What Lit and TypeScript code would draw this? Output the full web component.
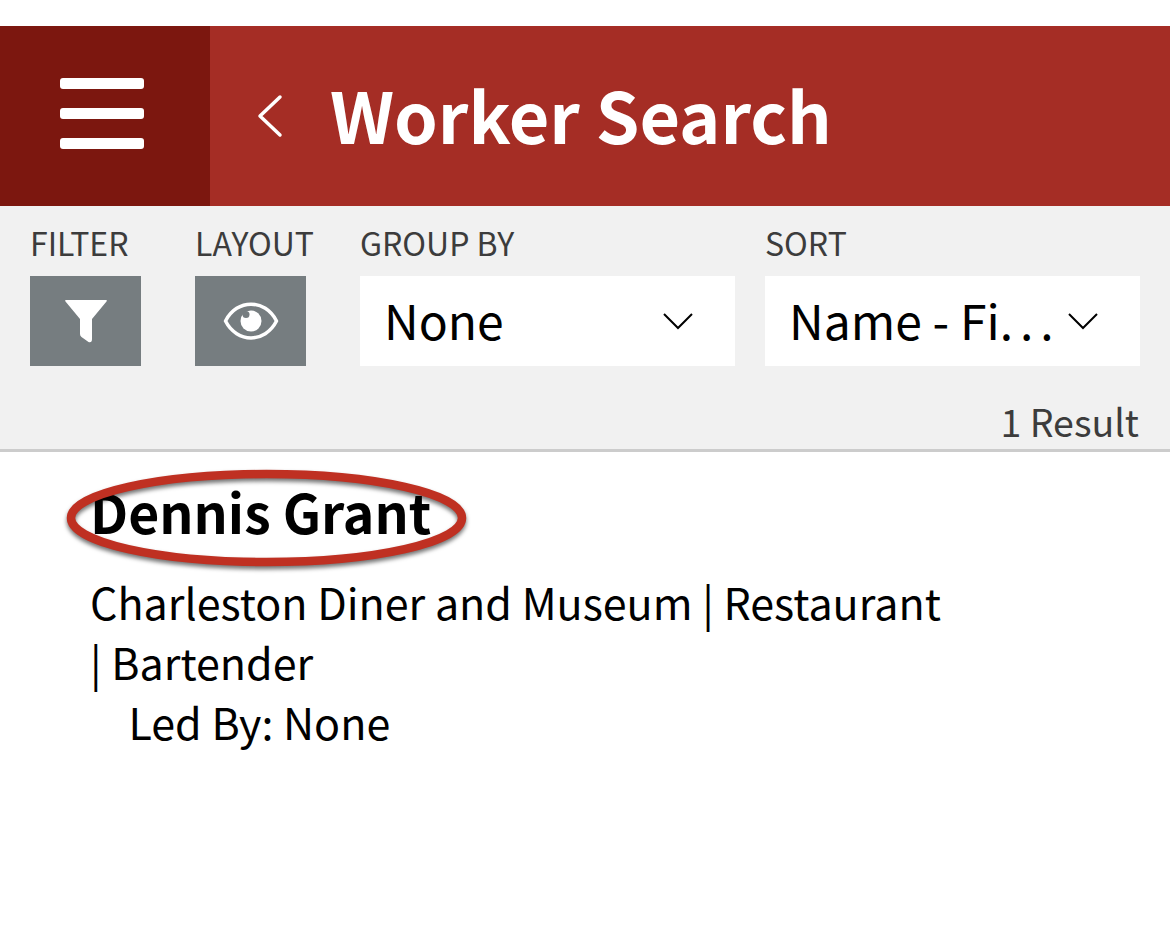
import { LitElement, html, css, svg } from 'lit';
import { customElement } from 'lit/decorators.js';

const chevron = svg`<svg class="chevron" width="32" height="18" viewBox="0 0 32 18"><path d="M2 2 L16 16 L30 2" fill="none" stroke="#000" stroke-width="2"/></svg>`;

@customElement('app-root')
export class AppRoot extends LitElement {
  static override styles = css`
    :host {
      display: block;
      position: relative;
      height: 939px;
      padding-top: 26px;
      box-sizing: border-box;
      background: #fff;
      font-family: "Noto Sans CJK JP", "Noto Sans", sans-serif;
      color: #000;
      overflow: hidden;
    }

    .header {
      display: flex;
      align-items: center;
      height: 180px;
      background: #a52d25;
      color: #fff;
    }

    .menu {
      display: flex;
      flex-direction: column;
      justify-content: center;
      gap: 19px;
      box-sizing: border-box;
      width: 210px;
      height: 100%;
      padding: 0 66px 5px 60px;
      background: #7c170f;
    }

    .menu span {
      height: 11px;
      border-radius: 3px;
      background: #fff;
    }

    .back {
      display: block;
      margin-left: 46px;
    }

    .title {
      margin: 0 0 4px 46px;
      font-size: 70px;
      line-height: 90px;
      font-weight: 700;
    }

    .toolbar {
      box-sizing: border-box;
      height: 246px;
      padding: 17px 30px 0;
      background: #f1f1f1;
      border-bottom: 3px solid #ccc;
    }

    .controls {
      display: flex;
    }

    .group {
      display: flex;
      flex-direction: column;
    }

    .group.filter { width: 111px; margin-right: 54px; }
    .group.layout { width: 111px; margin-right: 54px; }
    .group.by { width: 375px; margin-right: 30px; }
    .group.sort { width: 375px; }

    .label {
      height: 53px;
      font-size: 32px;
      line-height: 38px;
      color: #3c3c3c;
      white-space: nowrap;
    }

    .icon-btn {
      display: flex;
      align-items: center;
      justify-content: center;
      height: 90px;
      background: #767d80;
    }

    .select {
      display: flex;
      align-items: center;
      box-sizing: border-box;
      height: 90px;
      padding: 0 41px 0 25px;
      background: #fff;
      font-size: 48px;
      line-height: 60px;
    }

    .select .value {
      flex: 1;
      min-width: 0;
      margin-bottom: 5px;
      margin-left: -1px;
      white-space: nowrap;
    }

    .dots {
      letter-spacing: 7px;
    }

    .chevron {
      flex: none;
      margin-left: 12px;
    }

    .results {
      margin-top: 30px;
      padding-right: 1px;
      font-size: 37.500px;
      line-height: 50px;
      text-align: right;
      color: #3c3c3c;
    }

    .worker {
      padding: 29px 225px 0 90px;
      font-size: 43px;
      line-height: 60px;
    }

    .name {
      margin: 0 0 30px;
      font-size: 53.500px;
      line-height: 60px;
      font-weight: 700;
    }

    .led {
      padding-left: 38.500px;
    }

    .oval {
      position: absolute;
      left: 60px;
      top: 463px;
      filter: drop-shadow(0 3px 2px rgba(0, 0, 0, 0.55));
    }
  `;

  override render() {
    return html`
      <div class="header">
        <div class="menu"><span></span><span></span><span></span></div>
        <svg class="back" width="28" height="44" viewBox="0 0 28 44">
          <path d="M24 3 L4 22 L24 41" fill="none" stroke="#fff" stroke-width="3.500" stroke-linecap="round" stroke-linejoin="round"/>
        </svg>
        <h1 class="title">Worker Search</h1>
      </div>
      <div class="toolbar">
        <div class="controls">
          <div class="group filter">
            <div class="label">FILTER</div>
            <div class="icon-btn">
              <svg width="42" height="43" viewBox="0 0 42 43">
                <path d="M1 0 H41 Q42.500 0 41.500 1.500 L27 19 V39 Q27 43 23.500 42 L16.500 37 Q15 36 15 34 V19 L.5 1.500 Q-.5 0 1 0 Z" fill="#fff"/>
              </svg>
            </div>
          </div>
          <div class="group layout">
            <div class="label">LAYOUT</div>
            <div class="icon-btn">
              <svg width="56" height="38" viewBox="0 0 56 38">
                <path d="M2.500 19 C14 -3.500 42 -3.500 53.500 19 C42 41.500 14 41.500 2.500 19 Z" fill="none" stroke="#fff" stroke-width="3.500" stroke-linejoin="round"/>
                <circle cx="28" cy="19" r="10.500" fill="#fff"/>
                <circle cx="23" cy="12.500" r="3.500" fill="#767d80"/>
              </svg>
            </div>
          </div>
          <div class="group by">
            <div class="label">GROUP BY</div>
            <div class="select"><span class="value">None</span>${chevron}</div>
          </div>
          <div class="group sort">
            <div class="label">SORT</div>
            <div class="select"><span class="value">Name - Fi<span class="dots">...</span></span>${chevron}</div>
          </div>
        </div>
        <div class="results">1 Result</div>
      </div>
      <div class="worker">
        <h2 class="name">Dennis Grant</h2>
        <div>Charleston Diner and Museum | Restaurant | Bartender</div>
        <div class="led">Led By: None</div>
      </div>
      <svg class="oval" width="416" height="112" viewBox="0 0 416 112">
        <ellipse cx="206.500" cy="55" rx="195.500" ry="44" fill="none" stroke="#bf3022" stroke-width="8.500"/>
      </svg>
    `;
  }
}
